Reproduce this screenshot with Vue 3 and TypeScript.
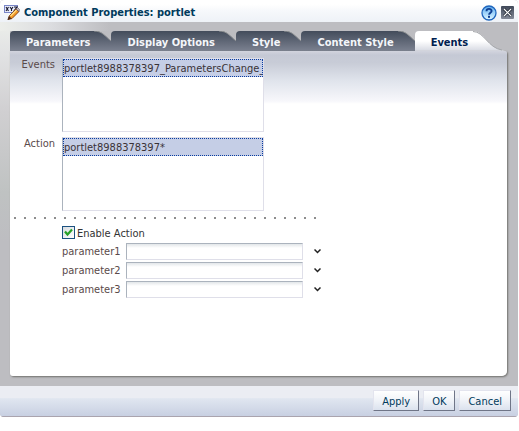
<script setup lang="ts">
import { reactive, ref } from 'vue'

const tabs: string[] = ['Parameters', 'Display Options', 'Style', 'Content Style', 'Events']
const activeTab = ref('Events')

const events = ['portlet8988378397_ParametersChange_Event']
const actions = ['portlet8988378397*']
const selectedEvents = ref<string[]>([events[0]])
const selectedActions = ref<string[]>([actions[0]])

const enableAction = ref(true)
const parameters = reactive([
  { name: 'parameter1', value: '' },
  { name: 'parameter2', value: '' },
  { name: 'parameter3', value: '' },
])
</script>

<template>
  <section class="dialog" role="dialog" aria-labelledby="dialog-title">
    <header class="titlebar">
      <svg class="title-icon" width="16" height="16" viewBox="0 0 16 16" aria-hidden="true">
        <rect x="0.5" y="0.5" width="13" height="7" fill="#e8ecfb" stroke="#7a86c8" />
        <path d="M2 2l2.500 4M4.500 2L2 6M6 2l1.500 2L9 2M7.500 4v2M10 2h3l-3 4h3" fill="none" stroke="#15152c" stroke-width="1.100" />
        <path d="M4 14.500l1.500-4L12 4l3 2.500-7 7z" fill="#f59a28" stroke="#7a3a10" stroke-width="0.900" />
        <path d="M6.500 11L12.500 5" stroke="#ffe08a" stroke-width="1.300" />
        <path d="M12 4l1.500-1.500 2 2L15 6.500z" fill="#c8c0c0" stroke="#5a4a5a" stroke-width="0.600" />
        <path d="M3.500 15l1.500-4 2.500 2.500z" fill="#4a2a1a" />
      </svg>
      <h1 id="dialog-title" class="title">Component Properties: portlet</h1>
      <button class="icon-button" type="button" aria-label="Help">
        <svg width="16" height="16" viewBox="0 0 16 16">
          <defs>
            <linearGradient id="help-fill" x1="0" y1="0" x2="0" y2="1">
              <stop offset="0" stop-color="#5ba9ee" />
              <stop offset="0.500" stop-color="#9fd4fb" />
              <stop offset="1" stop-color="#e2f7ff" />
            </linearGradient>
          </defs>
          <circle cx="8" cy="8" r="7" fill="url(#help-fill)" stroke="#1f66bd" stroke-width="1.300" />
          <path d="M5.500 6.200C5.500 3.200 10.600 3.200 10.600 6c0 1.700-2.500 1.800-2.500 3.700" fill="none" stroke="#103f91" stroke-width="1.900" />
          <rect x="7" y="10.800" width="2" height="2" fill="#103f91" />
        </svg>
      </button>
      <button class="icon-button" type="button" aria-label="Close">
        <svg width="13" height="13" viewBox="0 0 13 13">
          <defs>
            <linearGradient id="close-fill" x1="0" y1="0" x2="0" y2="1">
              <stop offset="0" stop-color="#3f4858" />
              <stop offset="1" stop-color="#858b98" />
            </linearGradient>
          </defs>
          <rect width="13" height="13" rx="1" fill="url(#close-fill)" />
          <path d="M3 3l7 7M10 3l-7 7" stroke="#1c222c" stroke-width="2.600" />
          <path d="M3 3l7 7M10 3l-7 7" stroke="#fff" stroke-width="1.200" />
        </svg>
      </button>
    </header>

    <main class="body">
      <div class="tabs" role="tablist">
        <button
          v-for="tab in tabs"
          :key="tab"
          class="tab"
          :class="{ active: tab === activeTab }"
          type="button"
          role="tab"
          :aria-selected="tab === activeTab"
          @click="activeTab = tab"
        >
          <span class="tab-label">{{ tab }}</span>
          <svg v-if="tab === activeTab" class="tab-edge" width="34" height="20" viewBox="0 0 34 20" aria-hidden="true">
            <defs>
              <linearGradient id="edge-active" x1="0" y1="0" x2="0" y2="1">
                <stop offset="0" stop-color="#ffffff" />
                <stop offset="0.500" stop-color="#ffffff" />
                <stop offset="1" stop-color="#d6d9e2" />
              </linearGradient>
            </defs>
            <path d="M0 0H2C13 0 17 17 31 19L34 20H0z" fill="url(#edge-active)" />
            <path d="M2 0.500C13 0.500 17 17 31 19" fill="none" stroke="#a4a6aa" />
          </svg>
          <svg v-else class="tab-edge" width="18" height="20" viewBox="0 0 18 20" aria-hidden="true">
            <defs>
              <linearGradient id="edge-idle" x1="0" y1="0" x2="0" y2="1">
                <stop offset="0" stop-color="#434c5b" />
                <stop offset="1" stop-color="#7b8190" />
              </linearGradient>
            </defs>
            <path d="M0 0H1C9 0 12 5 18 10V20H0z" fill="url(#edge-idle)" />
            <path d="M1 0C9 0 12 5 18 10" fill="none" stroke="#8d9092" stroke-width="1" />
          </svg>
        </button>
      </div>

      <form class="panel" @submit.prevent>
        <div class="field">
          <label class="field-label" for="events">Events</label>
          <select id="events" v-model="selectedEvents" class="listbox" multiple size="4">
            <option v-for="item in events" :key="item" :value="item">{{ item }}</option>
          </select>
        </div>
        <div class="field">
          <label class="field-label" for="actions">Action</label>
          <select id="actions" v-model="selectedActions" class="listbox" multiple size="4">
            <option v-for="item in actions" :key="item" :value="item">{{ item }}</option>
          </select>
        </div>

        <div class="divider" role="separator"></div>

        <div class="details">
          <label class="check">
            <span class="check-box">
              <input v-model="enableAction" type="checkbox" />
              <svg v-if="enableAction" width="9" height="9" viewBox="0 0 9 9" aria-hidden="true">
                <path d="M1 3.500L3.500 6.500 8 1.500" fill="none" stroke="#27a127" stroke-width="2.200" />
              </svg>
            </span>
            <span class="check-text">Enable Action</span>
          </label>
          <div v-for="parameter in parameters" :key="parameter.name" class="parameter">
            <label class="parameter-label" :for="parameter.name">{{ parameter.name }}</label>
            <input :id="parameter.name" v-model="parameter.value" class="text-input" type="text" />
            <button class="chevron" type="button" :aria-label="`${parameter.name} options`">
              <svg width="7" height="5" viewBox="0 0 7 5">
                <path d="M0.500 0.500L3.500 3.500 6.500 0.500" fill="none" stroke="#222" stroke-width="1.500" />
              </svg>
            </button>
          </div>
        </div>
      </form>
    </main>

    <footer class="footer">
      <button class="push" type="button">Apply</button>
      <button class="push" type="button">OK</button>
      <button class="push" type="button">Cancel</button>
    </footer>
  </section>
</template>

<style>
body {
  background: #fff;
}
</style>

<style scoped>
.dialog,
.dialog * {
  box-sizing: border-box;
}

.dialog {
  display: flex;
  flex-direction: column;
  margin-right: 1px;
  min-height: calc(100vh - 14px);
  overflow: hidden;
  border-radius: 4px;
  background: #bdbdc1;
  color: #5a4a4a;
  font: 11px/14px Tahoma, "DejaVu Sans Condensed", "DejaVu Sans", sans-serif;
}

button,
input,
select {
  margin: 0;
  font: inherit;
}

.titlebar {
  display: flex;
  align-items: center;
  gap: 4px;
  height: 22px;
  padding: 3px 4px 0;
  background: linear-gradient(#fff 20%, #f6f8fb 50%, #eef2f7);
}

.title {
  flex: 1;
  margin: 0;
  color: #003a5c;
  font-size: 11px;
  font-weight: bold;
}

.icon-button {
  display: flex;
  padding: 0;
  border: 0;
  background: none;
}

.body {
  flex: 1;
  display: flex;
  flex-direction: column;
  padding: 9px 11px 10px 10px;
  background:
    linear-gradient(to right, #eceeea, #dcdde0 50px, #bdbdc1 110px) 0 0 / 100% 9px no-repeat,
    linear-gradient(#eceeea, #e2e3e4 30px, #d0cfd1 90px, #bfc2c2 170px, #bdbdc1 220px) 0 0 / 10px 100% no-repeat,
    #bdbdc1;
}

.tabs {
  display: flex;
  height: 20px;
}

.tab {
  display: flex;
  padding: 0;
  border: 0;
  background: none;
  color: #f4f6fa;
  font-weight: bold;
}

.tab-label {
  height: 20px;
  padding: 5px 3px 1px 16px;
  border-top-left-radius: 4px;
  background: linear-gradient(#434c5b, #7b8190);
  line-height: 14px;
}

.tab-edge {
  display: block;
}

.tab.active {
  color: #00204f;
}

.tab.active .tab-label {
  background: linear-gradient(#fff 50%, #d6d9e2);
}

.panel {
  flex: 1;
  display: flex;
  flex-direction: column;
  gap: 5px;
  padding: 7px 0 0;
  border-radius: 0 2px 5px 3px;
  background: linear-gradient(#d2d4de, #c5c9d5 4px, #c8ccd7 12px, #e0e4ec 30px, #f7f7fb 50px, #fff 53px);
  box-shadow: 1px 1px 2px #70706c;
}

.field {
  display: flex;
  gap: 7px;
}

.field-label {
  width: 45px;
  text-align: right;
}

.listbox {
  width: 202px;
  height: 74px;
  padding: 0;
  overflow: hidden;
  border: 1px solid #dfdfe9;
  border-left-color: #abb3bd;
  border-radius: 0;
  outline: 0;
  background: #fff;
  color: #3a3236;
}

.listbox option {
  height: 18px;
  min-height: 18px;
  padding: 2px 0 0;
  overflow: hidden;
  line-height: 14px;
}

.listbox option:checked {
  border: 1px dotted #0a3ca0;
  background: linear-gradient(#c5cee6, #c5cee6);
  color: #3a3236;
}

.divider {
  width: 306px;
  height: 2px;
  margin: 1px 0 0 4px;
  background: repeating-linear-gradient(to right, #8d8d8d 0 2px, transparent 2px 10px);
}

.details {
  display: flex;
  flex-direction: column;
  gap: 2px;
  padding-left: 52px;
}

.check {
  display: flex;
  align-items: center;
  gap: 2px;
  height: 17px;
  color: #333;
}

.check-box {
  display: grid;
  place-items: center;
}

.check-box > * {
  grid-area: 1 / 1;
}

.check-box input {
  appearance: none;
  width: 13px;
  height: 13px;
  border: 1px solid #1c5180;
  background: linear-gradient(135deg, #d8dce0, #fff);
}

.check-box svg {
  z-index: 1;
  pointer-events: none;
}

.check-text {
  padding-top: 2px;
}

.parameter {
  display: flex;
  align-items: center;
  height: 17px;
}

.parameter-label {
  width: 64px;
}

.text-input {
  width: 177px;
  height: 17px;
  padding: 0 2px;
  border: 1px solid #dfdfe9;
  border-top-color: #abb3bd;
  border-left-color: #abb3bd;
  border-radius: 0;
  background: linear-gradient(#e2e6e9, #fff 4px);
}

.chevron {
  display: flex;
  margin-left: 8px;
  padding: 3px;
  border: 0;
  background: none;
}

.footer {
  display: flex;
  justify-content: flex-end;
  gap: 4px;
  padding: 4px 7px 5px;
  border-bottom: 1px solid #aaa4ae;
  background: linear-gradient(#ebedf3 40%, #e0e6f0 42%, #c8d0e2);
}

.push {
  height: 21px;
  padding: 2px 8px 0;
  border: 1px solid #e3e4ee;
  border-right-color: #6f7587;
  border-bottom-color: #6f7587;
  border-radius: 0;
  background: linear-gradient(#fff, #f0f3f8 50%, #dbe2ee);
  color: #003a5c;
}
</style>
